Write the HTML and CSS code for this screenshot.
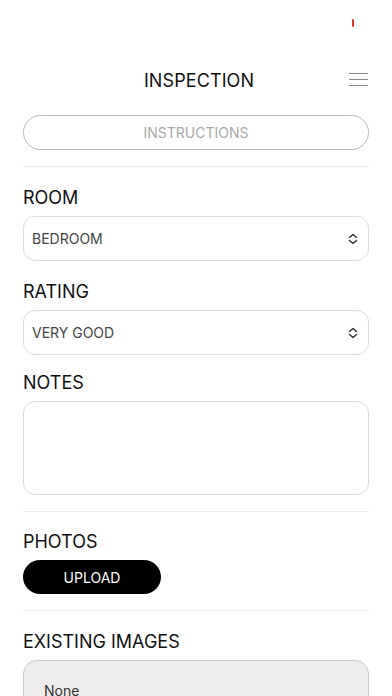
FILE: index.html
```html
<!DOCTYPE html>
<html>
<head>
<meta charset="utf-8">
<link rel="stylesheet" href="styles.css">
</head>
<body>
<div class="page">
  <div class="status"><span class="rec"></span></div>
  <div class="topbar">
    <div class="title">INSPECTION</div>
    <div class="menu">
      <svg width="19" height="14" viewBox="0 0 19 14"><path d="M0 1.5H19M0 7.5H19M0 13.5H19" stroke="#8a8a8a" stroke-width="1.2" fill="none"/></svg>
    </div>
  </div>
  <div class="content">
    <div class="outline-btn">INSTRUCTIONS</div>
    <div class="divider"></div>
    <div class="label">ROOM</div>
    <div class="select"><span>BEDROOM</span>
      <svg width="10" height="12" viewBox="0 0 10 12"><path d="M1.5 4.5L5 1.5L8.5 4.5M1.5 7.5L5 10.5L8.5 7.5" stroke="#333" stroke-width="1.5" fill="none" stroke-linecap="round" stroke-linejoin="round"/></svg>
    </div>
    <div class="label">RATING</div>
    <div class="select"><span>VERY GOOD</span>
      <svg width="10" height="12" viewBox="0 0 10 12"><path d="M1.5 4.5L5 1.5L8.5 4.5M1.5 7.5L5 10.5L8.5 7.5" stroke="#333" stroke-width="1.5" fill="none" stroke-linecap="round" stroke-linejoin="round"/></svg>
    </div>
    <div class="label notes-label">NOTES</div>
    <div class="textarea"></div>
    <div class="divider"></div>
    <div class="label photos-label">PHOTOS</div>
    <div class="upload">UPLOAD</div>
    <div class="divider"></div>
    <div class="label">EXISTING IMAGES</div>
    <div class="existing">None</div>
  </div>
</div>
</body>
</html>
```

FILE: styles.css
```css
html, body {
  margin: 0;
  padding: 0;
  background: #fff;
}
body {
  font-family: Inter, "Open Sans", "Liberation Sans", sans-serif;
  color: #111;
  overflow: hidden;
  height: 696px;
}
.page {
  width: 392px;
}
.status {
  height: 60px;
  display: flex;
  justify-content: flex-end;
  align-items: flex-start;
  padding-right: 38px;
  box-sizing: border-box;
  padding-top: 19px;
}
.rec {
  width: 2px;
  height: 8px;
  background: #e0332a;
  border-radius: 1px;
}
.topbar {
  height: 40px;
  display: flex;
  align-items: center;
  justify-content: center;
  position: relative;
  padding-left: 6px;
}
.title {
  font-size: 18px;
  letter-spacing: 0.1px;
  color: #111;
}
.menu {
  position: absolute;
  right: 24px;
  top: 12px;
  display: flex;
}
.content {
  padding: 0 23px;
  display: flex;
  flex-direction: column;
}
.outline-btn {
  margin-top: 15px;
  height: 35px;
  box-sizing: border-box;
  border: 1px solid #b8b8b8;
  border-radius: 18px;
  display: flex;
  align-items: center;
  justify-content: center;
  font-size: 14px;
  color: #a8a8a8;
}
.divider {
  height: 1px;
  background: #ececec;
  margin-top: 16px;
}
.label {
  font-size: 18px;
  line-height: 27px;
  margin-top: 17px;
  color: #111;
}
.select + .label {
  margin-top: 17px;
}
.select + .notes-label {
  margin-top: 14px;
}
.divider + .photos-label {
  margin-top: 16px;
}
.select {
  margin-top: 5px;
  height: 45px;
  box-sizing: border-box;
  border: 1px solid #dcdcdc;
  border-radius: 12px;
  display: flex;
  align-items: center;
  justify-content: space-between;
  padding: 0 10px 0 8px;
  font-size: 14px;
  color: #444;
}
.textarea {
  margin-top: 5px;
  height: 94px;
  box-sizing: border-box;
  border: 1px solid #dcdcdc;
  border-radius: 12px;
}
.upload {
  margin-top: 5px;
  width: 138px;
  height: 34px;
  background: #000;
  color: #fff;
  border-radius: 17px;
  display: flex;
  align-items: center;
  justify-content: center;
  font-size: 14px;
}
.existing {
  margin-top: 5px;
  height: 80px;
  box-sizing: border-box;
  background: #eeedeb;
  border: 1px solid #c8c8c8;
  border-radius: 14px;
  padding: 21px 20px;
  font-size: 14px;
  color: #333;
}
```
